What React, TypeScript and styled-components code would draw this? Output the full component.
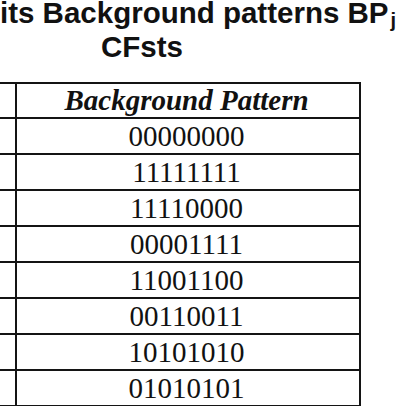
import React from 'react';
import styled, { createGlobalStyle } from 'styled-components';

const GlobalStyle = createGlobalStyle`
  html, body {
    margin: 0;
    padding: 0;
    background: #ffffff;
    overflow: hidden;
  }
`;

const patterns = [
  '00000000',
  '11111111',
  '11110000',
  '00001111',
  '11001100',
  '00110011',
  '10101010',
  '01010101',
];

const App: React.FC = () => {
  return (
    <>
      <GlobalStyle />
      <Page>
        <Caption>
          <CaptionLine>
            its Background patterns BP<Sub>j</Sub>
          </CaptionLine>
          <CaptionLine $indent={101}>CFsts</CaptionLine>
        </Caption>
        <Table>
          <Row $header>
            <SideCell />
            <HeadCell>Background Pattern</HeadCell>
          </Row>
          {patterns.map((p, i) => (
            <Row key={i}>
              <SideCell />
              <ValueCell>{p}</ValueCell>
            </Row>
          ))}
        </Table>
      </Page>
    </>
  );
};

export default App;

const Page = styled.div`
  width: 406px;
  height: 406px;
  overflow: hidden;
  background: #fff;
`;

const Caption = styled.div`
  margin-top: -4px;
  font-family: "Liberation Sans", Arial, sans-serif;
  font-weight: bold;
  font-size: 29.5px;
  line-height: 34px;
  color: #111;
  white-space: nowrap;
`;

const CaptionLine = styled.div<{ $indent?: number }>`
  padding-left: ${p => p.$indent || 0}px;
`;

const Sub = styled.span`
  font-size: 20px;
  line-height: 0;
  vertical-align: -4px;
  margin-left: 2px;
`;

const Table = styled.div`
  margin-top: 18px;
  width: 361px;
  border-top: 2px solid #141414;
`;

const Row = styled.div<{ $header?: boolean }>`
  display: grid;
  grid-template-columns: 17px 1fr;
  height: ${p => (p.$header ? 35 : 36)}px;
  box-sizing: border-box;
  border-bottom: 2px solid #141414;
`;

const SideCell = styled.div`
  border-right: 2px solid #141414;
`;

const Cell = styled.div`
  display: flex;
  align-items: center;
  justify-content: center;
  padding-right: 3px;
  border-right: 2px solid #141414;
  font-family: "Liberation Serif", "Times New Roman", serif;
  color: #111;
  white-space: nowrap;
`;

const HeadCell = styled(Cell)`
  font-size: 29px;
  font-weight: bold;
  font-style: italic;
`;

const ValueCell = styled(Cell)`
  font-size: 29px;
`;
